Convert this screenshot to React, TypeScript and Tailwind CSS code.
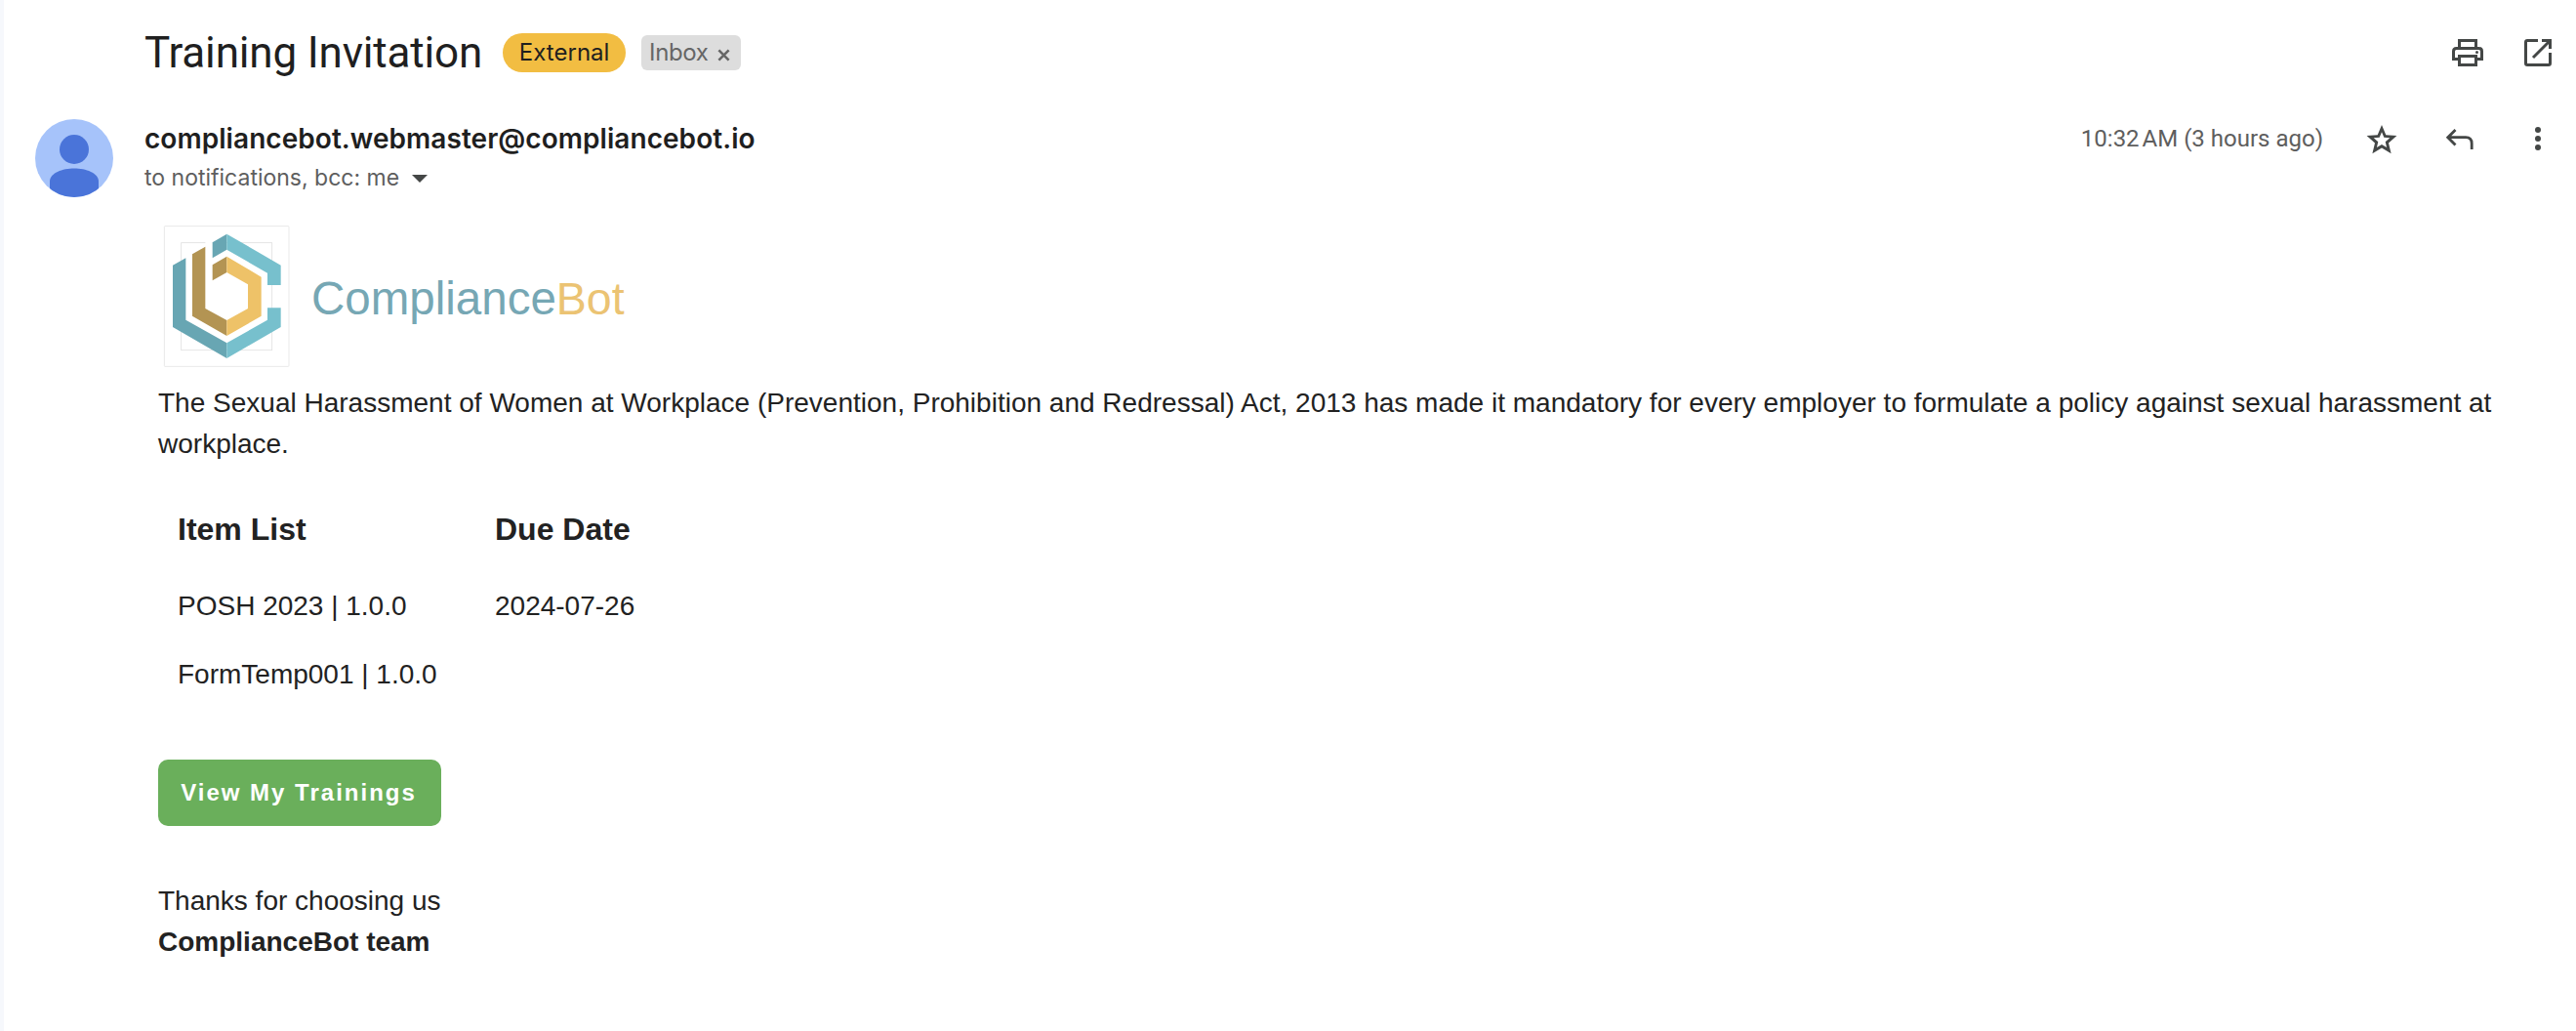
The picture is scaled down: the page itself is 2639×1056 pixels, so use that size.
import React from 'react';

const TRAININGS = [
  { item: 'POSH 2023 | 1.0.0', due: '2024-07-26' },
  { item: 'FormTemp001 | 1.0.0', due: '' },
];

const PrintIcon = () => (
  <svg className="w-8 h-7" viewBox="0 0 32 28" fill="none" stroke="currentColor" strokeWidth="3">
    <path d="M7.5 8.5V1.5H24.5V8.5" />
    <path d="M7 20.5H1.5V12.5Q1.5 9.5 4.5 9.5H27.5Q30.5 9.5 30.5 12.5V20.5H25" />
    <path d="M7.5 17.5H24.5V26.5H7.5Z" />
    <circle cx="25.5" cy="13.5" r="1.5" fill="currentColor" stroke="none" />
  </svg>
);

const OpenIcon = () => (
  <svg className="w-7 h-7" viewBox="0 0 28 28" fill="none" stroke="currentColor" strokeWidth="3">
    <path d="M14 1.5H3.2Q1.5 1.5 1.5 3.2V24.8Q1.5 26.5 3.2 26.5H24.8Q26.5 26.5 26.5 24.8V14" />
    <path d="M18 1.5H26.5V10M26 2L9 19" />
  </svg>
);

const StarIcon = () => (
  <svg className="mt-0.5 w-8 h-[30px]" viewBox="0 0 32 30" fill="currentColor" fillRule="evenodd">
    <path d="M16 0L20.3 10.2L31.4 11.1L23 18.4L25.6 29.2L16 23.4L6.4 29.2L9 18.4L0.6 11.1L11.7 10.2ZM16 7.3L13.7 12.8L7.7 13.3L12.3 17.2L10.9 23L16 19.9L21.1 23L19.7 17.2L24.3 13.3L18.3 12.8Z" />
  </svg>
);

const ReplyIcon = () => (
  <svg className="mt-px w-7 h-[21px]" viewBox="0 0 28 21" fill="none" stroke="currentColor" strokeWidth="2.8">
    <path d="M9.5 1L1.8 8.7L9.5 16.4M2 8.7H20Q26.2 8.7 26.2 15V21" />
  </svg>
);

const MoreIcon = () => (
  <svg className="w-6 h-6" viewBox="0 0 24 24" fill="currentColor">
    <circle cx="12" cy="3" r="3" />
    <circle cx="12" cy="12" r="3" />
    <circle cx="12" cy="21" r="3" />
  </svg>
);

const Avatar = () => (
  <svg className="w-20 h-20 rounded-full bg-[#a6c3fa]" viewBox="0 0 80 80" fill="#4a74d9">
    <circle cx="40" cy="31" r="15" />
    <path d="M15 80V64C15 55 28 50.5 40 50.5S65 55 65 64V80Z" />
  </svg>
);

const LogoMark = () => (
  <svg className="w-[145px] h-[155px]" viewBox="0 0 435 465">
    <rect x="25" y="20" width="383" height="431" rx="2" fill="none" stroke="#e9e9e9" strokeWidth="3" />
    <rect x="77" y="71" width="279" height="330" fill="none" stroke="#e0e0e0" strokeWidth="2.5" />
    {/* white fill keeps the guide square out of the gaps */}
    <path d="M91 118L111 106V296L217 357V379L91 308Z" fill="#fff" />
    <path d="M151 60H173V118L151 130Z" fill="#fff" />
    {/* C */}
    <path d="M51 140L91 118V308L217 379V426L51 330Z" fill="#68a6b3" />
    <path d="M173 70L217 44V92L173 118Z" fill="#68a6b3" />
    <path d="M217 44L383 140V201H342V164L217 92Z" fill="#77c0cd" />
    <path d="M217 379L342 308V271H383V330L217 426Z" fill="#77c0cd" />
    {/* b */}
    <path d="M111 106L151 83V273L217 309V357L111 296Z" fill="#b39453" />
    <path d="M173 139L217 113V162L173 187Z" fill="#b39453" />
    <path d="M217 113L323 176V296L217 357V309L282 273V199L217 162Z" fill="#eec268" />
  </svg>
);

export const MailHeader = () => {
  return (
    <header className="pt-[14px]">
      <div className="flex items-center h-20 pl-36 pr-[25px]">
        <h1 className="font-['Roboto',sans-serif] text-[44px] leading-[52px] tracking-[-0.17px] text-[#1f1f1f]">
          Training Invitation
        </h1>
        <span className="ml-[21px] flex h-10 w-[126px] items-center justify-center rounded-full bg-[#f2bd42] font-['Inter',sans-serif] text-[24px] text-[#1f1f1f]">
          External
        </span>
        <span className="ml-4 flex h-9 w-[102px] items-center rounded-md bg-[#ddd] pl-2 font-['Inter',sans-serif] text-[24px] tracking-[-0.4px] text-[#666]">
          Inbox
          <svg className="ml-[10px] mt-1 w-[13px] h-[13px]" viewBox="0 0 14 14" stroke="#666" strokeWidth="2.8">
            <path d="M1.5 1.5L12.5 12.5M12.5 1.5L1.5 12.5" />
          </svg>
        </span>
        <div className="ml-auto flex items-center gap-[42px] text-[#444746]">
          <PrintIcon />
          <OpenIcon />
        </div>
      </div>

      <div className="mt-7 flex items-start pl-8 pr-[27px]">
        <Avatar />
        <div className="ml-8 font-['Inter',sans-serif]">
          <p className="text-[28px] leading-10 font-semibold tracking-[0.05px] text-[#1f1f1f]">
            compliancebot.webmaster@compliancebot.io
          </p>
          <p className="flex items-center text-[23px] leading-10 text-[#5e5e5e]">
            to notifications, bcc: me
            <svg className="ml-[13px] mt-0.5 w-4 h-2" viewBox="0 0 16 8" fill="#444746">
              <path d="M0 0H16L8 8Z" />
            </svg>
          </p>
        </div>
        <div className="ml-auto flex h-10 items-center text-[#444746]">
          <span className="mr-11 font-['Roboto',sans-serif] text-[24px] text-[#5e5e5e]">
            10:32{'\u202f'}AM (3 hours ago)
          </span>
          <StarIcon />
          <span className="ml-[50px]"><ReplyIcon /></span>
          <span className="ml-[54px]"><MoreIcon /></span>
        </div>
      </div>
    </header>
  );
};

export const MailBody = () => {
  return (
    <main className="pl-[158px] pr-[60px] font-['Liberation_Sans',sans-serif] text-[28px] leading-[42px] text-[#222]">
      <div className="mt-[23px] ml-[-2px] flex items-center h-[155px]">
        <LogoMark />
        <p className="ml-[14px] mt-1.5 text-[47.5px] leading-none text-[#76a7b4]">
          Compliance<span className="text-[46.5px] text-[#ebc373]">Bot</span>
        </p>
      </div>

      <p className="mt-3 tracking-[0.005px]">
        The Sexual Harassment of Women at Workplace (Prevention, Prohibition and Redressal) Act, 2013 has made it
        mandatory for every employer to formulate a policy against sexual harassment at workplace.
      </p>

      <table className="mt-[23px] ml-5">
        <thead>
          <tr className="h-[86px] text-left text-[32px]">
            <th className="w-[325px]">Item List</th>
            <th>Due Date</th>
          </tr>
        </thead>
        <tbody>
          {TRAININGS.map((row) => (
            <tr key={row.item} className="h-[70px]">
              <td className="pt-px">{row.item}</td>
              <td className="pt-px">{row.due}</td>
            </tr>
          ))}
        </tbody>
      </table>

      <button className="mt-[53px] block h-[68px] w-[290px] rounded-[10px] bg-[#6aaf5b] pr-0.5 text-[24px] font-bold tracking-[2px] text-white">
        View My Trainings
      </button>

      <p className="mt-14">Thanks for choosing us</p>
      <p className="font-bold">ComplianceBot team</p>
    </main>
  );
};

export default function App() {
  return (
    <div className="min-h-screen border-l-4 border-[#f6f8fc] bg-white">
      <MailHeader />
      <MailBody />
    </div>
  );
}
